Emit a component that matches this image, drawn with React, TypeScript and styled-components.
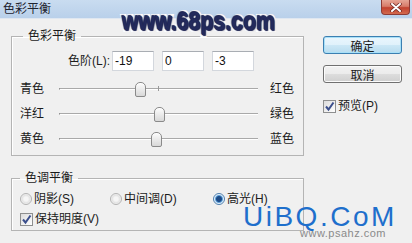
import React from 'react';
import styled, { createGlobalStyle } from 'styled-components';

interface sliderInfo {
  left: string,
  right: string,
  value: number
}

const SLIDERS: sliderInfo[] = [
  { left: '青色', right: '红色', value: -19 },
  { left: '洋红', right: '绿色', value: 0 },
  { left: '黄色', right: '蓝色', value: -3 },
];

const TRACK_W = 199;
const THUMB_W = 11;

const CheckMark = () => (
  <svg width="11" height="11" viewBox="0 0 11 11">
    <path d="M2 5.5 L4.5 8.5 L9.5 1.5" fill="none" stroke="#3b4f8c" strokeWidth="2" />
  </svg>
);

const App: React.FC = () => {
  return (
    <>
      <GlobalStyle />
      <Dialog>
        <TitleBar>
          <TitleText>色彩平衡</TitleText>
          <CloseButton>
            <svg width="12" height="9" viewBox="0 0 12 9">
              <path d="M2 1 L10 8 M10 1 L2 8" stroke="#6b2420" strokeWidth="3.4" strokeLinecap="round" />
              <path d="M2 1 L10 8 M10 1 L2 8" stroke="#ffffff" strokeWidth="2" strokeLinecap="round" />
            </svg>
          </CloseButton>
        </TitleBar>

        <Body>
          <LeftCol>
            <Group>
              <Legend $offset={3}>色彩平衡</Legend>
              <LevelRow>
                <LevelLabel>色阶(L):</LevelLabel>
                <LevelInput readOnly value="-19" />
                <LevelInput readOnly value="0" />
                <LevelInput readOnly value="-3" />
              </LevelRow>
              <SliderGrid>
                {SLIDERS.map((s) => (
                  <React.Fragment key={s.left}>
                    <SideLabel>{s.left}</SideLabel>
                    <Track>
                      <Tick />
                      <Thumb
                        style={{ left: Math.round((s.value + 100) / 200 * (TRACK_W - 1) - THUMB_W / 2) }}
                      />
                    </Track>
                    <SideLabel>{s.right}</SideLabel>
                  </React.Fragment>
                ))}
              </SliderGrid>
            </Group>

            <ToneGroup>
              <Legend $offset={0}>色调平衡</Legend>
              <RadioRow>
                <Option><Radio /><span>阴影(S)</span></Option>
                <Option><Radio /><span>中间调(D)</span></Option>
                <Option><Radio $checked /><span>高光(H)</span></Option>
              </RadioRow>
              <Option>
                <CheckBox><CheckMark /></CheckBox>
                <span>保持明度(V)</span>
              </Option>
            </ToneGroup>
          </LeftCol>

          <RightCol>
            <DlgButton $primary>确定</DlgButton>
            <DlgButton>取消</DlgButton>
            <PreviewRow>
              <CheckBox><CheckMark /></CheckBox>
              <span>预览(P)</span>
            </PreviewRow>
          </RightCol>
        </Body>

        <SiteMark>www.68ps.com</SiteMark>
        <BrandMark>UiBQ.CoM</BrandMark>
        <SmallMark>www.psahz.com</SmallMark>
      </Dialog>
    </>
  );
};

const GlobalStyle = createGlobalStyle`
  html, body {
    margin: 0;
    padding: 0;
  }
  body {
    width: 412px;
    height: 243px;
    overflow: hidden;
    background: #f0f0f0;
    font-family: "Liberation Sans", "Noto Sans CJK SC", sans-serif;
    font-size: 12px;
    color: #1b1b1b;
  }
`;
const Dialog = styled.div`
  position: relative;
  width: 412px;
  height: 243px;
  background: #f0f0f0;
  overflow: hidden;
`;
const TitleBar = styled.div`
  height: 19px;
  display: flex;
  justify-content: space-between;
  align-items: flex-start;
  padding-left: 3px;
  box-sizing: border-box;
  background: linear-gradient(#c9dcf0, #b9d0ea);
  border-bottom: 1px solid #dfe7f1;
`;
const TitleText = styled.div`
  line-height: 18px;
  font-size: 12px;
  color: #1e2430;
`;
const CloseButton = styled.div`
  width: 29px;
  height: 15px;
  margin-right: 2px;
  box-sizing: border-box;
  display: flex;
  align-items: center;
  justify-content: center;
  border: 1px solid #8e3b35;
  border-top: none;
  border-radius: 0 0 4px 4px;
  background: linear-gradient(#e6a595 0%, #d77c6a 45%, #c2412f 55%, #d26a4f 100%);
`;
const Body = styled.div`
  display: flex;
  gap: 19px;
  padding: 10px 0 0 11px;
`;
const LeftCol = styled.div`
  width: 293px;
  display: flex;
  flex-direction: column;
  gap: 15px;
`;
const Group = styled.fieldset`
  margin: 0;
  padding: 8px 6px 4px 8px;
  min-width: 0;
  border: 1px solid #b4b4b4;
  box-shadow: inset 1px 1px 0 #ffffff;
`;
const ToneGroup = styled(Group)`
  padding: 6px 6px 3px 8px;
  display: flex;
  flex-direction: column;
  gap: 4px;
`;
const Legend = styled.legend<{ $offset: number }>`
  padding: 0 5px;
  margin-left: ${(p) => p.$offset}px;
  line-height: 14px;
  font-size: 12px;
`;
const LevelRow = styled.div`
  display: flex;
  align-items: center;
  height: 20px;
`;
const LevelLabel = styled.div`
  width: 92px;
  padding-right: 2px;
  box-sizing: border-box;
  text-align: right;
  line-height: 16px;
`;
const LevelInput = styled.input`
  width: 42px;
  height: 20px;
  box-sizing: border-box;
  margin: 0 8px 0 0;
  padding: 0 2px;
  border: 1px solid #d3d7dd;
  border-top-color: #a9adb3;
  background: #ffffff;
  font-family: "Liberation Sans", sans-serif;
  font-size: 12px;
  color: #111;
  outline: none;
`;
const SliderGrid = styled.div`
  display: grid;
  grid-template-columns: 39px ${TRACK_W}px auto;
  grid-auto-rows: 25px;
  align-items: center;
  margin-top: 5px;
  & > div:nth-child(3n) {
    padding-left: 12px;
  }
`;
const SideLabel = styled.div`
  line-height: 16px;
`;
const Track = styled.div`
  position: relative;
  height: 2px;
  border-top: 1px solid #a9a9a9;
  border-bottom: 1px solid #ffffff;
  box-sizing: border-box;
  border-left: 1px solid #7c7c7c;
`;
const Tick = styled.div`
  position: absolute;
  left: 98px;
  top: -3px;
  width: 1px;
  height: 5px;
  background: #9a9a9a;
`;
const Thumb = styled.div`
  position: absolute;
  top: -7px;
  width: ${THUMB_W}px;
  height: 15px;
  box-sizing: border-box;
  border: 1px solid #8a8a8a;
  border-radius: 5px 5px 2px 2px;
  background: linear-gradient(#fdfdfd 0%, #ececec 45%, #d8d8d8 100%);
  box-shadow: inset 0 1px 0 #ffffff;
`;
const RadioRow = styled.div`
  display: grid;
  grid-template-columns: 90px 103px auto;
  height: 16px;
  align-items: center;
`;
const Option = styled.div`
  display: flex;
  align-items: center;
  gap: 2px;
  height: 16px;
  line-height: 16px;
`;
const Radio = styled.span<{ $checked?: boolean }>`
  width: 12px;
  height: 12px;
  box-sizing: border-box;
  border-radius: 50%;
  border: 1px solid ${(p) => (p.$checked ? '#4f7fae' : '#b3b3b3')};
  background: ${(p) => (p.$checked
    ? 'radial-gradient(circle, #1d4a86 0 2.5px, #5c9fd9 3.5px, #e8f2fb 4.5px)'
    : 'radial-gradient(circle, #f6f6f6 0 2px, #e2e2e2 4px, #f4f4f4 5px)')};
  flex-shrink: 0;
`;
const CheckBox = styled.span`
  width: 13px;
  height: 13px;
  box-sizing: border-box;
  border: 1px solid #8e8f8f;
  background: linear-gradient(135deg, #dcdcdc, #ffffff);
  display: flex;
  align-items: center;
  justify-content: center;
  flex-shrink: 0;
`;
const RightCol = styled.div`
  width: 79px;
  display: flex;
  flex-direction: column;
  gap: 11px;
  padding-top: 7px;
`;
const DlgButton = styled.div<{ $primary?: boolean }>`
  height: 18px;
  box-sizing: border-box;
  display: flex;
  align-items: center;
  justify-content: center;
  border-radius: 3px;
  font-size: 12px;
  border: 1px solid ${(p) => (p.$primary ? '#3c7fb1' : '#707070')};
  background: ${(p) => (p.$primary
    ? 'linear-gradient(#eaf6fd 0%, #e0f1fb 50%, #cde8f6 50%, #b8dcef 100%)'
    : 'linear-gradient(#f2f2f2 0%, #ebebeb 50%, #dddddd 50%, #cfcfcf 100%)')};
  box-shadow: inset 0 0 0 1px ${(p) => (p.$primary ? '#a8e0f8' : '#fbfbfb')};
`;
const PreviewRow = styled.div`
  display: flex;
  align-items: center;
  gap: 2px;
  margin-top: 4px;
  line-height: 16px;
`;
const SiteMark = styled.div`
  position: absolute;
  left: 122px;
  top: 8px;
  font-family: "Liberation Sans", sans-serif;
  font-weight: bold;
  font-size: 26px;
  line-height: 26px;
  color: #232a5c;
  transform: scaleX(0.82);
  transform-origin: left top;
  -webkit-text-stroke: 4px #ffffff;
  paint-order: stroke fill;
  text-shadow: 0 0 1px #1c2250, 1px 1px 1px #1c2250, -1px -1px 1px #1c2250;
`;
const BrandMark = styled.div`
  position: absolute;
  left: 243px;
  top: 206px;
  font-family: "Liberation Sans", sans-serif;
  font-size: 28px;
  line-height: 22px;
  letter-spacing: 2.5px;
  color: #1e6fcc;
`;
const SmallMark = styled.div`
  position: absolute;
  left: 300px;
  top: 228px;
  font-family: "Liberation Sans", sans-serif;
  font-size: 11px;
  line-height: 10px;
  color: #8a8a8a;
  letter-spacing: 0.5px;
`;

export default App;
